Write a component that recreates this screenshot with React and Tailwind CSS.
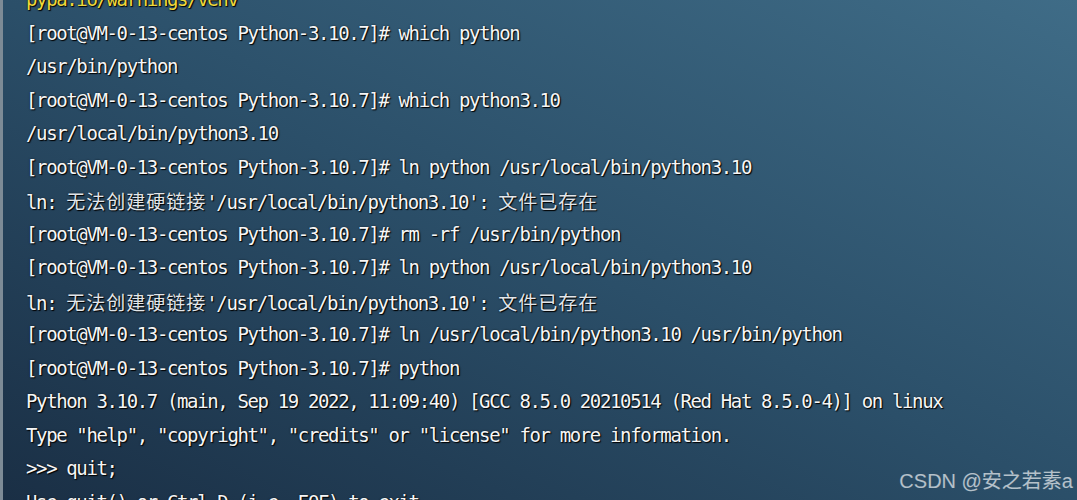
import React from 'react';

const mono = "font-['DejaVu_Sans_Mono','Noto_Sans_CJK_SC',monospace]";

const prompt = '[root@VM-0-13-centos Python-3.10.7]# ';

const Cjk = ({ children }) => (
  <span className="font-['Noto_Sans_CJK_SC',sans-serif] text-[19px] tracking-[1px] text-[#e2e6ea]">
    {children}
  </span>
);

const lines = [
  { text: 'pypa.io/warnings/venv', yellow: true },
  { text: prompt + 'which python' },
  { text: '/usr/bin/python' },
  { text: prompt + 'which python3.10' },
  { text: '/usr/local/bin/python3.10' },
  { text: prompt + 'ln python /usr/local/bin/python3.10' },
  { err: true },
  { text: prompt + 'rm -rf /usr/bin/python' },
  { text: prompt + 'ln python /usr/local/bin/python3.10' },
  { err: true },
  { text: prompt + 'ln /usr/local/bin/python3.10 /usr/bin/python' },
  { text: prompt + 'python' },
  { text: 'Python 3.10.7 (main, Sep 19 2022, 11:09:40) [GCC 8.5.0 20210514 (Red Hat 8.5.0-4)] on linux' },
  { text: 'Type "help", "copyright", "credits" or "license" for more information.' },
  { text: '>>> quit;' },
  { text: 'Use quit() or Ctrl-D (i.e. EOF) to exit' },
];

export default function App() {
  return (
    <div className="relative h-[500px] w-[1077px] overflow-hidden border-l-[3px] border-[#7d8b96] bg-linear-to-bl from-[#3f6c87] via-[#2b4f69] to-[#1a2f45]">
      <div className={`-mt-[17px] flex flex-col pl-[23px] ${mono} text-[19px] tracking-[-1.37px] text-[#f6f6f6] [text-shadow:1px_1px_1px_#000,0_0_2px_rgba(0,0,0,0.6)]`}>
        {lines.map((l, i) => (
          <div key={i} className={`h-[33.5px] whitespace-pre leading-[33.5px] ${l.yellow ? 'text-[#efd83a]' : ''}`}>
            {l.err ? (
              <>
                {'ln: '}
                <Cjk>无法创建硬链接</Cjk>
                {"'/usr/local/bin/python3.10': "}
                <Cjk>文件已存在</Cjk>
              </>
            ) : (
              l.text
            )}
          </div>
        ))}
      </div>
      <div className="absolute bottom-[4px] right-[4px] font-['Liberation_Sans','Noto_Sans_CJK_SC',sans-serif] text-[20px] text-white/65">
        CSDN @安之若素a
      </div>
    </div>
  );
}
